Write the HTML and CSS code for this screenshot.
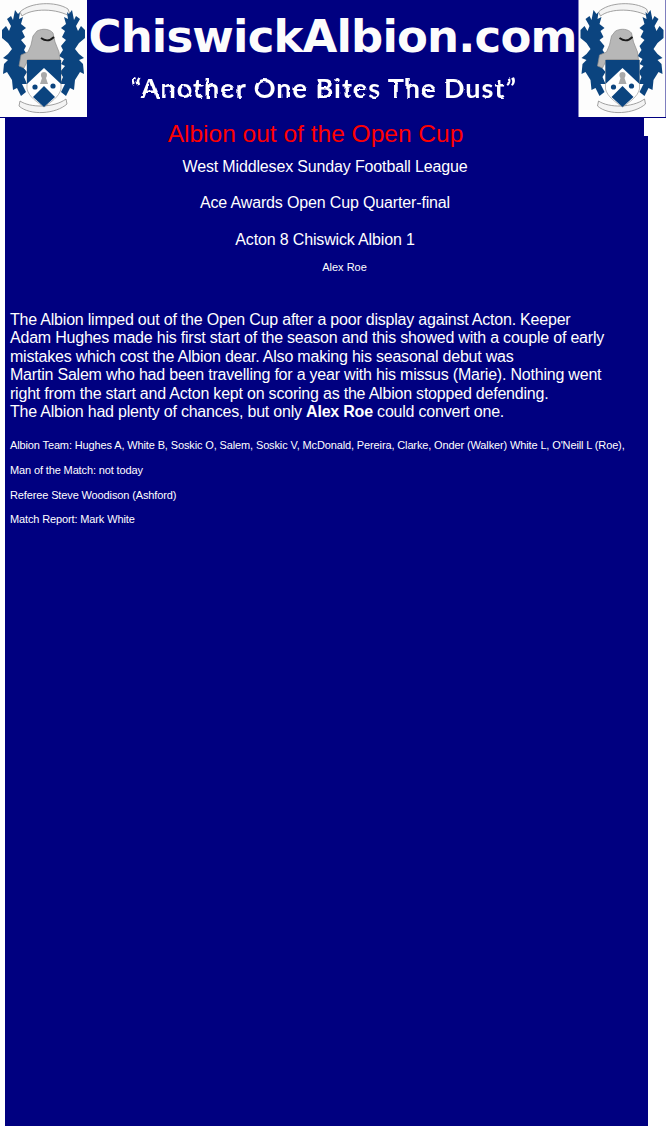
FILE: index.html
```html
<!DOCTYPE html>
<html lang="en">
<head>
<meta charset="utf-8">
<title>Albion out of the Open Cup</title>
<link rel="stylesheet" href="styles.css">
</head>
<body>
<svg class="defs" width="0" height="0" aria-hidden="true">
  <defs>
    <filter id="rough" x="-2%" y="-10%" width="104%" height="120%">
      <feTurbulence type="fractalNoise" baseFrequency="0.12" numOctaves="2" seed="4"/>
      <feDisplacementMap in="SourceGraphic" scale="3"/>
    </filter>
    <path id="mantle" d="M15 10L18 14 20 12 19 19 23 17 21 24 26 28 22 31 25 37 21 40 26 46 24 50 28 56 23 59 26 64 22 66 27 72 24 77 27 84 22 84 26 92 21 96 17 88 13 90 12 80 7 72 3 74 4 64 8 60 3 58 8 54 12 49 8 43 2 38 2 30 6 26 9 31 11 26 7 19 11 16 13 20Z"/>
    <symbol id="crest" viewBox="0 0 87 117">
      <rect width="87" height="117" fill="#fdfdfd"/>
      <path d="M20 12C30 2 56 1 68 9L71 17C57 8 32 8 22 16Z" fill="#f4f4f4" stroke="#8a8a8a" stroke-width=".8"/>
      <path d="M20 101C30 108 54 108 66 99L67 104C56 114 30 116 19 106Z" fill="#f4f4f4" stroke="#8a8a8a" stroke-width=".8"/>
      <use href="#mantle" fill="#0b447f"/>
      <use href="#mantle" fill="#0b447f" transform="matrix(-1 0 0 1 87 0)"/>
      <path d="M37 31C43 28 50 29 53 33L55 42 59 52 60 60 28 60 24 68 19 66 21 55 28 52 31 45 33 36Z" fill="#b7b7b7" stroke="#8b8b8b" stroke-width=".7"/>
      <path d="M41 38C45 41 50 41 54 37" fill="none" stroke="#1a1a1a" stroke-width="1.8"/>
      <path d="M27 60H61V89C59 97 51 102 44 107 37 102 29 97 27 89Z" fill="#fff" stroke="#777" stroke-width=".5"/>
      <path d="M27 60H61V84L44 68 27 84Z" fill="#0b447f"/>
      <path d="M44 86L55 97 44 107 33 97Z" fill="#0b447f"/>
      <circle cx="35" cy="87" r="2.6" fill="#0b447f"/>
      <circle cx="53" cy="86" r="2.6" fill="#0b447f"/>
      <path d="M44 72C47 72 48 75 46 78L48 84H40L42 78C40 75 41 72 44 72Z" fill="#a9a9a9"/>
    </symbol>
  </defs>
</svg>
<header class="banner">
  <svg class="crest" aria-hidden="true"><use href="#crest"/></svg>
  <div class="titles">
    <div class="site-name">ChiswickAlbion.com</div>
    <div class="motto">“Another One Bites The Dust”</div>
  </div>
  <svg class="crest crest-right" aria-hidden="true"><use href="#crest"/></svg>
</header>
<main class="report">
  <h1 class="headline">Albion out of the Open Cup</h1>
  <p class="sub">West Middlesex Sunday Football League</p>
  <p class="sub">Ace Awards Open Cup Quarter-final</p>
  <p class="sub">Acton 8 Chiswick Albion 1</p>
  <p class="scorer">Alex Roe</p>
  <p class="story">The Albion limped out of the Open Cup after a poor display against Acton. Keeper<br>Adam Hughes made his first start of the season and this showed with a couple of early<br>mistakes which cost the Albion dear. Also making his seasonal debut was<br>Martin Salem who had been travelling for a year with his missus (Marie). Nothing went<br>right from the start and Acton kept on scoring as the Albion stopped defending.<br>The Albion had plenty of chances, but only <b>Alex Roe</b> could convert one.</p>
  <p class="small">Albion Team: Hughes A, White B, Soskic O, Salem, Soskic V, McDonald, Pereira, Clarke, Onder (Walker) White L, O'Neill L (Roe),</p>
  <p class="small">Man of the Match: not today</p>
  <p class="small">Referee Steve Woodison (Ashford)</p>
  <p class="small">Match Report: Mark White</p>
</main>
</body>
</html>
```

FILE: styles.css
```css
html, body {
  margin: 0;
  padding: 0;
  background: #fff;
}
body {
  width: 666px;
  height: 1126px;
  overflow: hidden;
  font-family: "Liberation Sans", Arial, sans-serif;
  color: #fff;
}
.defs {
  position: absolute;
}
.banner {
  display: flex;
  height: 117px;
  background: #000080;
  border-bottom: 1px solid #000080;
}
.crest {
  flex: none;
  width: 87px;
  height: 117px;
}
.crest-right {
  width: 88px;
}
.titles {
  flex: 1;
  min-width: 0;
  text-align: center;
}
.site-name {
  margin-top: 9px;
  font-family: "DejaVu Sans", sans-serif;
  font-weight: 700;
  font-size: 45px;
  line-height: 56px;
  letter-spacing: -0.85px;
  color: #fcfcfc;
  white-space: nowrap;
}
.motto {
  margin-top: 6px;
  padding-right: 17px;
  font-family: Lato, sans-serif;
  font-weight: 700;
  font-size: 27px;
  line-height: 34px;
  letter-spacing: 1px;
  white-space: nowrap;
  filter: url(#rough);
}
.report {
  position: relative;
  box-sizing: border-box;
  width: 643px;
  height: 1008px;
  margin-left: 5px;
  padding: 1px 0 0 5px;
  background: #000080;
}
.report::before {
  content: "";
  position: absolute;
  top: 0;
  right: 0;
  width: 4px;
  height: 18px;
  background: #fff;
}
.headline {
  margin: 0;
  width: 611px;
  text-align: center;
  font-size: 24.5px;
  font-weight: 400;
  line-height: 30px;
  color: #f00;
}
.sub {
  margin: 0 0 18.3px;
  width: 630px;
  text-align: center;
  font-size: 16px;
  line-height: 18px;
  letter-spacing: -0.15px;
}
.headline + .sub {
  margin-top: 9px;
}
.scorer {
  margin: -7px 0 0;
  width: 669px;
  text-align: center;
  font-size: 11px;
  line-height: 14px;
}
.story {
  margin: 37px 0 0;
  font-size: 16px;
  line-height: 18.4px;
  letter-spacing: -0.21px;
}
.small {
  margin: 0 0 10.7px;
  font-size: 11px;
  line-height: 14px;
  letter-spacing: -0.13px;
  white-space: nowrap;
}
.story + .small {
  margin-top: 17px;
}
```
